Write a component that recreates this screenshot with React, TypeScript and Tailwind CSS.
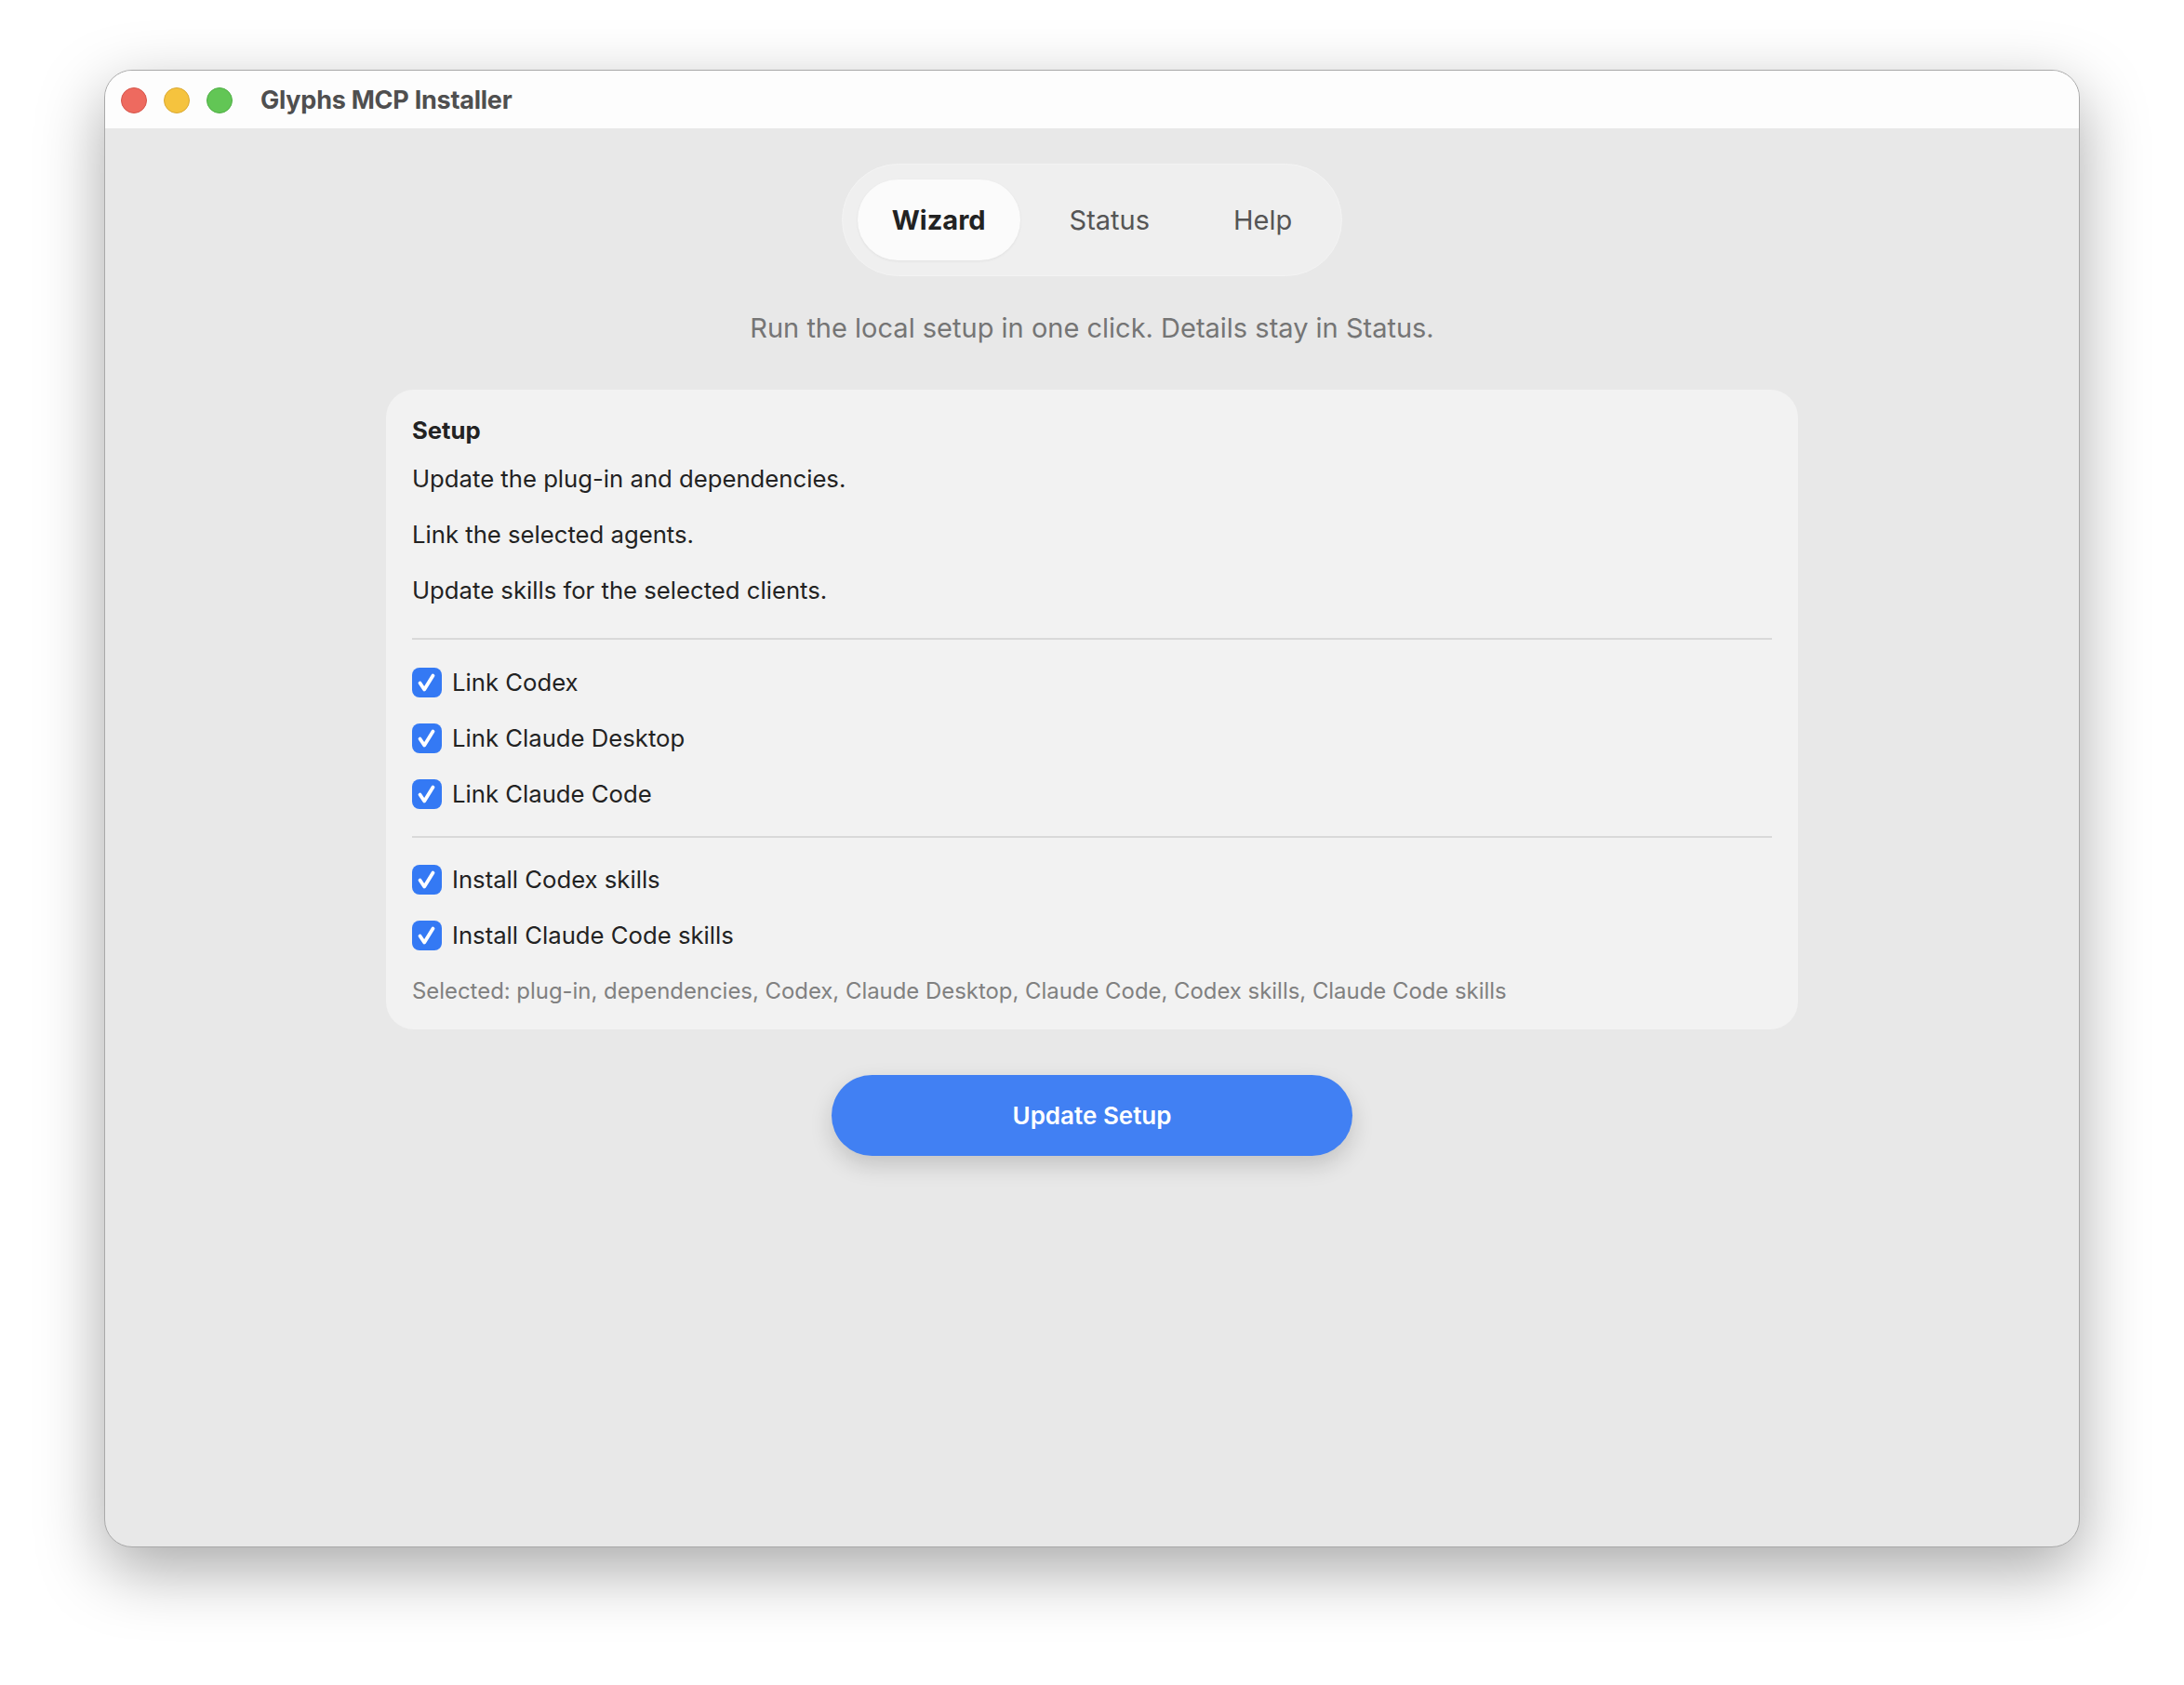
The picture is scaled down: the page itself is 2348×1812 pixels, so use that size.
import { ReactNode } from 'react';

const font = { fontFamily: 'Inter, "Noto Sans", sans-serif' };

function TrafficLight({ color, ring }: { color: string; ring: string }) {
  return <span className={`block w-[28px] h-[28px] rounded-full border ${color} ${ring}`} />;
}

function Check() {
  return (
    <span className="flex items-center justify-center w-[32px] h-[32px] rounded-[8px] bg-[#3479f4] shrink-0">
      <svg width="32" height="32" viewBox="0 0 32 32" fill="none">
        <path d="M8.5 16.5 L13.2 23.5 L22.5 8.5" stroke="white" strokeWidth="3.8" strokeLinecap="round" strokeLinejoin="round" />
      </svg>
    </span>
  );
}

function CheckRow({ children }: { children: ReactNode }) {
  return (
    <div className="flex items-center h-[60px] gap-[11px]">
      <Check />
      <span className="text-[25.7px] leading-[32px] text-[#222222]">{children}</span>
    </div>
  );
}

function Divider() {
  return <div className="h-[2px] bg-[#d9d9d9] my-[15px]" />;
}

export default function App() {
  const tabs = ['Wizard', 'Status', 'Help'];
  return (
    <div className="w-[2348px] h-[1812px] bg-white pt-[75px] pl-[112px]" style={font}>
      <div className="w-[2124px] h-[1589px] rounded-[30px] border border-[#a9a9a9] bg-[#e8e8e8] overflow-hidden shadow-[0_24px_70px_rgba(0,0,0,0.34)] flex flex-col">
        {/* title bar */}
        <div className="h-[62px] bg-[#fdfdfd] flex items-center pl-[17px] pt-[2px] shrink-0">
          <div className="flex gap-[18px]">
            <TrafficLight color="bg-[#ee6a5f]" ring="border-[#d5554b]" />
            <TrafficLight color="bg-[#f5c33e]" ring="border-[#d9a833]" />
            <TrafficLight color="bg-[#62c655]" ring="border-[#4fae45]" />
          </div>
          <span className="ml-[30px] text-[27px] font-bold text-[#4f4f4f] tracking-[-0.25px]">Glyphs MCP Installer</span>
        </div>

        <div className="flex flex-col items-center pt-[38px]">
          {/* tabs */}
          <div className="flex gap-[16px] p-[16px] rounded-full bg-[#efefef] border border-[#f3f3f3]">
            {tabs.map((t, i) => (
              <div
                key={t}
                className={
                  i === 0
                    ? 'h-[87px] px-[37px] flex items-center rounded-full bg-[#fbfbfb] shadow-[0_1px_3px_rgba(0,0,0,0.06)] text-[29px] font-bold text-[#222222]'
                    : 'h-[87px] px-[37px] flex items-center rounded-full text-[29px] text-[#555555]'
                }
              >
                {t}
              </div>
            ))}
          </div>

          <p className="mt-[38px] text-[29px] leading-[36px] text-[#757575]">
            Run the local setup in one click. Details stay in Status.
          </p>

          {/* setup card */}
          <div className="mt-[48px] w-[1518px] rounded-[30px] bg-[#f2f2f2] pt-[28px] px-[28px] pb-[27px]">
            <div className="text-[25.7px] leading-[32px] font-bold text-[#222222]">Setup</div>
            <div className="mt-[20px] flex flex-col gap-[28px] text-[25.7px] leading-[32px] text-[#222222]">
              <div>Update the plug-in and dependencies.</div>
              <div>Link the selected agents.</div>
              <div>Update skills for the selected clients.</div>
            </div>
            <div className="mt-[35px]" />
            <Divider />
            <div className="pt-[1px]">
              <CheckRow>Link Codex</CheckRow>
              <CheckRow>Link Claude Desktop</CheckRow>
              <CheckRow>Link Claude Code</CheckRow>
            </div>
            <Divider />
            <CheckRow>Install Codex skills</CheckRow>
            <CheckRow>Install Claude Code skills</CheckRow>
            <div className="mt-[16px] text-[23.9px] leading-[28px] text-[#808080]">
              Selected: plug-in, dependencies, Codex, Claude Desktop, Claude Code, Codex skills, Claude Code skills
            </div>
          </div>

          <button className="mt-[49px] w-[560px] h-[87px] rounded-full bg-[#4180f3] text-white text-[26px] font-semibold shadow-[0_10px_24px_rgba(0,0,0,0.16)]">
            Update Setup
          </button>
        </div>
      </div>
    </div>
  );
}
